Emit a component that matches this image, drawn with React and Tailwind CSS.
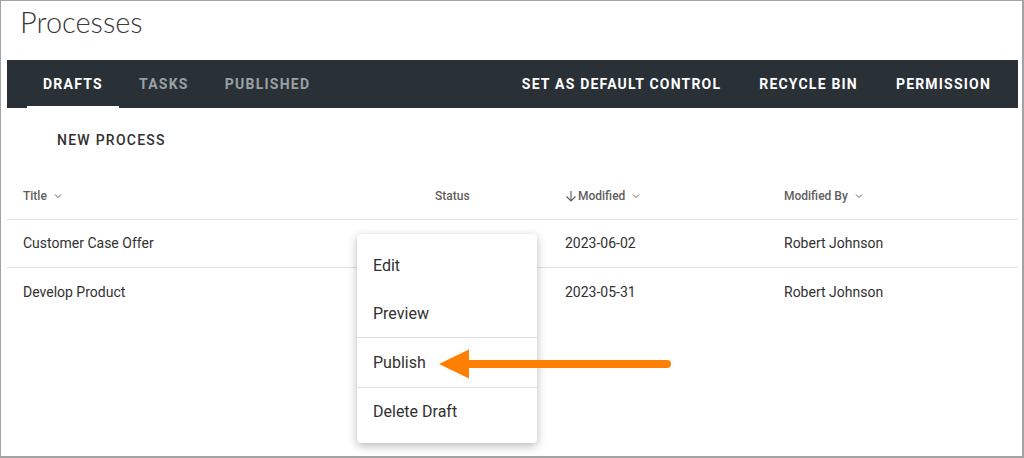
import React from "react";

const Chevron = () => (
  <svg width="10" height="10" viewBox="0 0 10 10" className="ml-[6px]" fill="none" stroke="#605e5c" strokeWidth="1">
    <path d="M2 3.5 L5 6.5 L8 3.5" />
  </svg>
);

const DownArrow = () => (
  <svg width="12" height="12" viewBox="0 0 12 12" className="mr-[1px]" fill="none" stroke="#605e5c" strokeWidth="1.1">
    <path d="M6 1 V11 M1.5 6.5 L6 11 L10.5 6.5" />
  </svg>
);

export default function App() {
  const font = { fontFamily: "Roboto, 'Liberation Sans', sans-serif" };
  return (
    <div
      className="relative w-[1024px] h-[458px] bg-white border-l border-t border-r-2 border-b-2 border-[#a3a3a3] pl-[6px] pr-[4px] overflow-hidden"
      style={font}
    >
      <div className="h-[59px] pl-[13px] pt-[3px]">
        <h1
          className="text-[29px] leading-[35px] font-light text-[#3a3a3a]"
          style={{ fontFamily: "Lato, Roboto, 'Liberation Sans', sans-serif" }}
        >
          Processes
        </h1>
      </div>

      <div className="h-[48px] bg-[#293036] flex items-stretch justify-between pt-[1px]">
        <div className="flex items-stretch pl-[20px]">
          <div className="relative flex items-center px-[16px] text-[14px] font-bold tracking-[1.25px] text-white">
            DRAFTS
            <div className="absolute left-0 right-0 -bottom-0 h-[2px] bg-white" />
          </div>
          <div className="flex items-center ml-[20px] text-[14px] font-bold tracking-[1.25px] text-[#9aa0a4]">
            TASKS
          </div>
          <div className="flex items-center ml-[36px] text-[14px] font-bold tracking-[1.25px] text-[#9aa0a4]">
            PUBLISHED
          </div>
        </div>
        <div className="flex items-center gap-[38px] pr-[27px] text-[14px] font-bold tracking-[1.2px] text-white">
          <span>SET AS DEFAULT CONTROL</span>
          <span>RECYCLE BIN</span>
          <span>PERMISSION</span>
        </div>
      </div>

      <div className="h-[64px] flex items-center pl-[50px]">
        <span className="text-[14px] font-medium tracking-[1.25px] text-[#323130]">NEW PROCESS</span>
      </div>

      <div className="grid grid-cols-[428px_130px_219px_1fr] h-[48px] items-center border-b border-[#e1e1e1] text-[12px] font-medium text-[#605e5c]">
        <div className="pl-[16px] flex items-center">Title<Chevron /></div>
        <div>Status</div>
        <div className="flex items-center"><DownArrow />Modified<Chevron /></div>
        <div className="flex items-center">Modified By<Chevron /></div>
      </div>
      <div className="grid grid-cols-[428px_130px_219px_1fr] h-[48px] items-center border-b border-[#e1e1e1] text-[14px] text-[#323130]">
        <div className="pl-[16px]">Customer Case Offer</div>
        <div></div>
        <div>2023-06-02</div>
        <div>Robert Johnson</div>
      </div>
      <div className="grid grid-cols-[428px_130px_219px_1fr] h-[48px] items-center text-[14px] text-[#323130]">
        <div className="pl-[16px]">Develop Product</div>
        <div></div>
        <div>2023-05-31</div>
        <div>Robert Johnson</div>
      </div>

      <div className="absolute left-[356px] top-[233px] w-[180px] bg-white rounded-[4px] shadow-[0_3px_10px_rgba(0,0,0,0.28)] pt-[8px] pb-[8px] text-[16px] text-[#323130]">
        <div className="h-[48px] flex items-center px-[16px]">Edit</div>
        <div className="h-[48px] flex items-center px-[16px] border-b border-[#e1e1e1]">Preview</div>
        <div className="h-[50px] flex items-center px-[16px] border-b border-[#e1e1e1]">Publish</div>
        <div className="h-[47px] flex items-center px-[16px]">Delete Draft</div>
      </div>

      <svg className="absolute left-[430px] top-[341px]" width="245" height="45" viewBox="0 0 245 45">
        <path d="M35 22 H236" stroke="#ff7f00" strokeWidth="8" strokeLinecap="round" />
        <path d="M8 22 L38 7.5 L38 36.5 Z" fill="#ff7f00" />
      </svg>
    </div>
  );
}
